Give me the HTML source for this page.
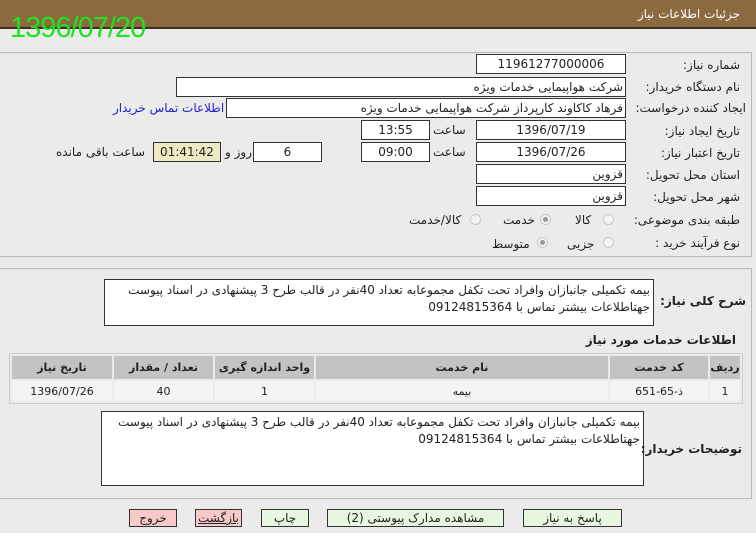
<!DOCTYPE html>
<html><head><meta charset="utf-8"><style>
*{box-sizing:border-box;margin:0;padding:0}
body{width:756px;height:533px;background:#ebebeb;position:relative;overflow:hidden;font-family:Tahoma,"DejaVu Sans","Noto Sans CJK SC",sans-serif;font-size:12px;color:#222}
.a{position:absolute}
.hdr{left:0;top:0;width:756px;height:29px;background:#8c6a3f;border-bottom:2px solid #3e2e1a}
.hdr span{position:absolute;right:16px;top:7px;color:#fff;font-size:12px}
.date{left:10px;top:12px;color:#22e022;font-size:29px;font-family:"Liberation Sans Narrow","Liberation Sans",sans-serif;letter-spacing:-1px}
.panel{border:1px solid #b8b8b8;background:#ebebeb}
.in{background:#fff;border:1px solid #333;height:20px;line-height:18px;font-size:12px;direction:rtl;padding-right:2px;white-space:nowrap;overflow:hidden}
.c{text-align:center;padding:0}
.lb{direction:rtl;white-space:nowrap;font-size:12px;text-align:right}
.rad{width:11px;height:11px;border-radius:50%;border:1px solid #c8c8c8;background:#f4f4f4}
.rad.on::after{content:"";position:absolute;left:2px;top:2px;width:5px;height:5px;border-radius:50%;background:#999}
table{border-collapse:separate;border-spacing:2px;background:#ebebeb;border:1px solid #ccc}
th{background:#c3c3c3;height:23px;font-size:11px;font-weight:bold}
td{background:#f4f4f4;height:20px;text-align:center;font-size:11px}
.ta{background:#fff;border:1px solid #333;direction:rtl;padding:2px 3px;line-height:17px;font-size:12px}
.btn{height:18px;border:1px solid #333;background:#e8f8e0;text-align:center;line-height:16px;font-size:12px}
.pk{background:#f9c9c9}
</style></head><body>
<div class="a hdr"><span>جزئیات اطلاعات نیاز</span></div>
<div class="a date">1396/07/20</div>
<div class="a panel" style="left:-2px;top:52px;width:754px;height:205px"></div>
<div class="a lb" style="right:16px;top:58px">شماره نیاز:</div>
<div class="a in c" style="left:476px;top:54px;width:150px">11961277000006</div>
<div class="a lb" style="right:16px;top:80px">نام دستگاه خریدار:</div>
<div class="a in" style="left:176px;top:77px;width:450px">شرکت هواپیمایی خدمات ویژه</div>
<div class="a lb" style="right:10px;top:101px">ایجاد کننده درخواست:</div>
<div class="a in" style="left:226px;top:98px;width:400px">فرهاد کاکاوند کارپرداز شرکت هواپیمایی خدمات ویژه</div>
<div class="a lb" style="left:113px;top:101px;color:#2222cc">اطلاعات تماس خریدار</div>
<div class="a lb" style="right:16px;top:124px">تاریخ ایجاد نیاز:</div>
<div class="a in c" style="left:476px;top:120px;width:150px">1396/07/19</div>
<div class="a lb" style="left:433px;top:123px">ساعت</div>
<div class="a in c" style="left:361px;top:120px;width:69px">13:55</div>
<div class="a lb" style="right:16px;top:146px">تاریخ اعتبار نیاز:</div>
<div class="a in c" style="left:476px;top:142px;width:150px">1396/07/26</div>
<div class="a lb" style="left:433px;top:145px">ساعت</div>
<div class="a in c" style="left:361px;top:142px;width:69px">09:00</div>
<div class="a in c" style="left:253px;top:142px;width:69px">6</div>
<div class="a lb" style="left:225px;top:145px">روز و</div>
<div class="a in c" style="left:153px;top:142px;width:68px;background:#ede9c3">01:41:42</div>
<div class="a lb" style="left:56px;top:145px">ساعت باقی مانده</div>
<div class="a lb" style="right:16px;top:168px">استان محل تحویل:</div>
<div class="a in" style="left:476px;top:164px;width:150px">قزوین</div>
<div class="a lb" style="right:16px;top:190px">شهر محل تحویل:</div>
<div class="a in" style="left:476px;top:186px;width:150px">قزوین</div>
<div class="a lb" style="right:16px;top:213px">طبقه بندی موضوعی:</div>
<div class="a rad" style="left:603px;top:214px"></div><div class="a lb" style="left:575px;top:213px">کالا</div>
<div class="a rad on" style="left:540px;top:214px"></div><div class="a lb" style="left:503px;top:213px">خدمت</div>
<div class="a rad" style="left:470px;top:214px"></div><div class="a lb" style="left:409px;top:213px">کالا/خدمت</div>
<div class="a lb" style="right:16px;top:236px">نوع فرآیند خرید :</div>
<div class="a rad" style="left:603px;top:237px"></div><div class="a lb" style="left:567px;top:237px">جزیی</div>
<div class="a rad on" style="left:537px;top:237px"></div><div class="a lb" style="left:492px;top:237px">متوسط</div>

<div class="a panel" style="left:-2px;top:268px;width:754px;height:231px"></div>
<div class="a ta" style="left:104px;top:279px;width:550px;height:47px">بیمه تکمیلی جانبازان وافراد تحت تکفل مجموعابه تعداد 40نفر در قالب طرح 3 پیشنهادی در اسناد پیوست جهتاطلاعات بیشتر تماس با 09124815364</div>
<div class="a lb" style="right:10px;top:294px;font-weight:bold;font-size:12px">شرح کلی نیاز:</div>
<div class="a lb" style="right:20px;top:333px;font-weight:bold;font-size:12px">اطلاعات خدمات مورد نیاز</div>
<table class="a" style="left:9px;top:353px;width:734px" dir="rtl">
<tr><th style="width:30px">ردیف</th><th style="width:98px">کد خدمت</th><th style="width:292px">نام خدمت</th><th style="width:99px">واحد اندازه گیری</th><th style="width:99px">تعداد / مقدار</th><th>تاریخ نیاز</th></tr>
<tr><td>1</td><td>ذ-65-651</td><td>بیمه</td><td>1</td><td>40</td><td>1396/07/26</td></tr>
</table>
<div class="a ta" style="left:101px;top:411px;width:543px;height:75px">بیمه تکمیلی جانبازان وافراد تحت تکفل مجموعابه تعداد 40نفر در قالب طرح 3 پیشنهادی در اسناد پیوست جهتاطلاعات بیشتر تماس با 09124815364</div>
<div class="a lb" style="right:14px;top:442px;font-weight:bold;font-size:12px">توضیحات خریدار:</div>

<div class="a btn" style="left:523px;top:509px;width:99px">پاسخ به نیاز</div>
<div class="a btn" style="left:327px;top:509px;width:177px">مشاهده مدارک پیوستی (2)</div>
<div class="a btn" style="left:261px;top:509px;width:48px">چاپ</div>
<div class="a btn pk" style="left:195px;top:509px;width:47px;text-decoration:underline">بازگشت</div>
<div class="a btn pk" style="left:129px;top:509px;width:48px">خروج</div>
</body></html>
